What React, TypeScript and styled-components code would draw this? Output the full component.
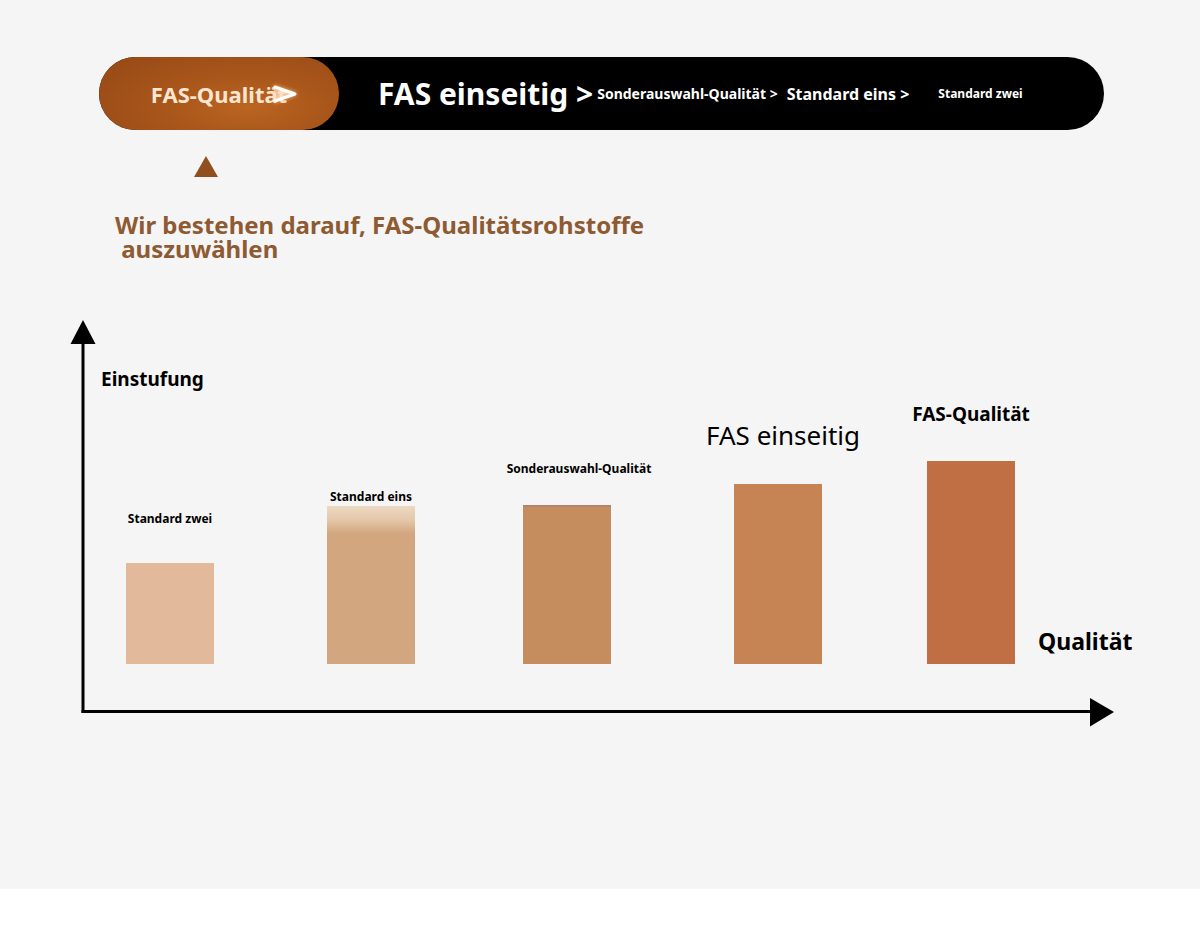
import React from "react";
import styled, { createGlobalStyle } from "styled-components";

const GlobalStyle = createGlobalStyle`
    * {
        box-sizing: border-box;
    }

    body {
        margin: 0;
        background-color: #ffffff;
        font-family: "Noto Sans", "Open Sans", Arial, sans-serif;
    }
`;

interface IBar {
    label: string;
    height: number;
    gap: number;
    offset: number;
    color: string;
    size: number;
    weight: number;
    shift?: number;
    fade?: boolean;
    edge?: boolean;
}

const bars: IBar[] = [
    { label: "Standard zwei", height: 101, gap: 36, offset: 56, color: "#e2b99a", size: 12, weight: 700 },
    { label: "Standard eins", height: 158, gap: 1, offset: 113, color: "#d2a77f", size: 12, weight: 700, fade: true },
    { label: "Sonderauswahl-Qualität", height: 159, gap: 28, offset: 108, color: "#c58c5d", size: 12, weight: 700, shift: 24, edge: true },
    { label: "FAS einseitig", height: 180, gap: 31, offset: 123, color: "#c68455", size: 26, weight: 400, shift: 10 },
    { label: "FAS-Qualität", height: 203, gap: 34, offset: 105, color: "#c06e43", size: 19, weight: 700 },
];

const Page = styled.main`
    display: flex;
    flex-direction: column;
    align-items: flex-start;

    width: 1200px;
    height: 889px;

    background-color: #f5f5f5;
`;

const Nav = styled.nav`
    display: flex;
    flex-direction: row;
    align-items: center;

    width: 1005px;
    height: 73px;
    margin: 57px 0 0 99px;

    border-radius: 37px;
    background-color: #000000;
    color: #ffffff;
    font-weight: 700;
    white-space: nowrap;
`;

const ActiveTab = styled.div`
    position: relative;

    display: flex;
    justify-content: center;
    align-items: center;

    width: 240px;
    height: 100%;
    flex-shrink: 0;

    border-radius: 37px;
    background: radial-gradient(ellipse 75% 95% at 62% 68%, #bb6521 0%, #a9561b 45%, #984a16 100%);

    color: #f9e6d0;
    font-size: 22px;
`;

const Glow = styled.svg`
    position: absolute;
    left: 170px;
    top: 27px;

    width: 30px;
    height: 20px;

    filter: drop-shadow(0 0 2px rgba(255, 200, 140, .9));
`;

const NavItem = styled.span<{ $size: number; $gap: number }>`
    margin-left: ${props => props.$gap}px;
    font-size: ${props => props.$size}px;
`;

const Pointer = styled.div`
    width: 0;
    height: 0;
    margin: 26px 0 0 194px;

    border-left: 12.5px solid transparent;
    border-right: 12.5px solid transparent;
    border-bottom: 21px solid #914f1f;
`;

const Headline = styled.h1`
    margin: 36px 0 0 115px;

    color: #8d5a32;
    font-size: 24px;
    font-weight: 700;
    line-height: 24px;
    white-space: pre;
`;

const Chart = styled.section`
    position: relative;

    width: 1046px;
    height: 410px;
    margin: 57px 0 0 70px;
`;

const Axes = styled.svg`
    position: absolute;
    inset: 0;

    width: 100%;
    height: 100%;
`;

const AxisTitle = styled.div<{ $size: number }>`
    position: relative;

    font-size: ${props => props.$size}px;
    font-weight: 700;
    color: #000000;
    white-space: nowrap;
`;

const YTitle = styled(AxisTitle)`
    margin: 48px 0 0 31px;
`;

const Plot = styled.div`
    position: relative;

    display: flex;
    flex-direction: row;
    align-items: flex-end;

    height: 272px;
`;

const Column = styled.div<{ $offset: number }>`
    display: flex;
    flex-direction: column;
    align-items: center;

    width: 88px;
    margin-left: ${props => props.$offset}px;
`;

const BarLabel = styled.span<{ $size: number; $weight: number; $gap: number; $shift: number }>`
    margin: 0 0 ${props => props.$gap}px ${props => props.$shift}px;

    color: #000000;
    font-size: ${props => props.$size}px;
    font-weight: ${props => props.$weight};
    white-space: nowrap;
`;

const Bar = styled.div<{ $height: number; $color: string; $fade?: boolean; $edge?: boolean }>`
    width: 88px;
    height: ${props => props.$height}px;

    background: ${props => props.$fade
        ? `linear-gradient(180deg, #ecd9c2 0px, #e4c8aa 14px, ${props.$color} 27px)`
        : props.$color};
    border-top: ${props => props.$edge ? "2px solid #b2856a" : "none"};
`;

const XTitle = styled(AxisTitle)`
    margin: 0 0 7px 23px;
`;

export default function App() {
    return (
        <>
            <GlobalStyle />
            <Page>
                <Nav>
                    <ActiveTab>
                        FAS-Qualität
                        <Glow viewBox="0 0 30 20">
                            <polygon points="5,3 26,10 5,17" fill="rgba(255, 232, 210, .55)" />
                            <polyline
                                points="6,3 26,10 6,17"
                                fill="none"
                                stroke="#ffffff"
                                strokeWidth="3"
                                strokeLinejoin="round"
                                strokeLinecap="round"
                            />
                        </Glow>
                    </ActiveTab>
                    <NavItem $size={30} $gap={39}>FAS einseitig &gt;</NavItem>
                    <NavItem $size={14} $gap={4}>Sonderauswahl-Qualität &gt;</NavItem>
                    <NavItem $size={16} $gap={9}>Standard eins &gt;</NavItem>
                    <NavItem $size={12} $gap={29}>Standard zwei</NavItem>
                </Nav>

                <Pointer />

                <Headline>{"Wir bestehen darauf, FAS-Qualitätsrohstoffe\n auszuwählen"}</Headline>

                <Chart>
                    <Axes viewBox="0 0 1046 410">
                        <line x1="13" y1="22" x2="13" y2="395" stroke="#000" strokeWidth="3" />
                        <polygon points="13,2 0.5,26 25.5,26" fill="#000" />
                        <line x1="11.5" y1="393.5" x2="1022" y2="393.5" stroke="#000" strokeWidth="3" />
                        <polygon points="1020,380 1044,394 1020,408.5" fill="#000" />
                    </Axes>

                    <YTitle $size={19}>Einstufung</YTitle>

                    <Plot>
                        {bars.map(bar => (
                            <Column key={bar.label} $offset={bar.offset}>
                                <BarLabel
                                    $size={bar.size}
                                    $weight={bar.weight}
                                    $gap={bar.gap}
                                    $shift={bar.shift ?? 0}
                                >
                                    {bar.label}
                                </BarLabel>
                                <Bar $height={bar.height} $color={bar.color} $fade={bar.fade} $edge={bar.edge} />
                            </Column>
                        ))}
                        <XTitle $size={23}>Qualität</XTitle>
                    </Plot>
                </Chart>
            </Page>
        </>
    );
}
